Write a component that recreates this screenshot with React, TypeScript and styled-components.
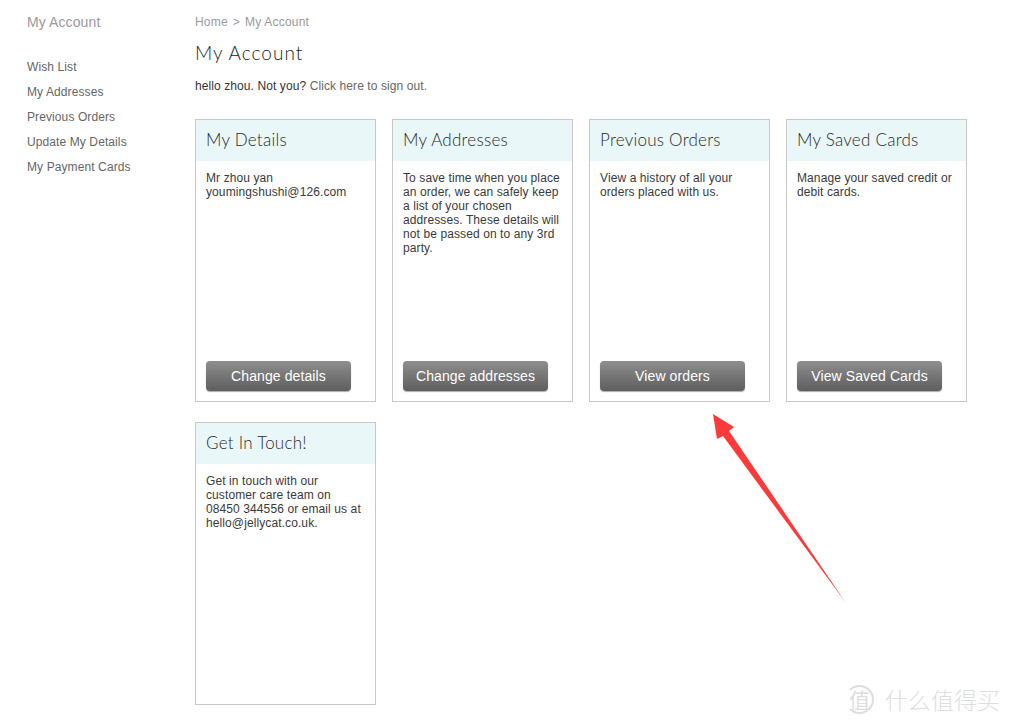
import styled, { createGlobalStyle } from 'styled-components';

const GlobalStyle = createGlobalStyle`
  html, body {
    margin: 0;
    padding: 0;
    background: #fff;
    font-family: "Liberation Sans", Arial, sans-serif;
    font-size: 12px;
    color: #333;
  }
`;

const Page = styled.div`
  position: relative;
  display: flex;
  width: 1011px;
  height: 724px;
  overflow: hidden;
  box-sizing: border-box;
`;

const Sidebar = styled.aside`
  width: 195px;
  padding: 14px 0 0 27px;
  box-sizing: border-box;
  flex: none;
`;

const SideTitle = styled.h3`
  margin: 0 0 24px;
  font-size: 14px;
  line-height: 17px;
  font-weight: 400;
  letter-spacing: 0.1px;
  color: #999;
`;

const SideLink = styled.a`
  display: block;
  height: 25px;
  line-height: 25px;
  letter-spacing: 0.1px;
  color: #666;
`;

const Main = styled.main`
  flex: 1;
  padding-top: 15px;
`;

const Crumbs = styled.div`
  display: flex;
  gap: 5px;
  line-height: 14px;
  letter-spacing: 0.2px;
  color: #999;
`;

const Heading = styled.h1`
  margin: 11px 0 0;
  font-family: "Lato", sans-serif;
  font-size: 19px;
  line-height: 26px;
  font-weight: 300;
  letter-spacing: 1px;
  color: #222;
`;

const Hello = styled.p`
  margin: 13px 0 26px;
  line-height: 14px;
  letter-spacing: 0.09px;
  color: #333;
  > a {
    color: #666;
  }
`;

const Cards = styled.div`
  display: grid;
  grid-template-columns: repeat(4, 181px);
  grid-auto-rows: 283px;
  column-gap: 16px;
  row-gap: 20px;
`;

const Card = styled.section`
  display: flex;
  flex-direction: column;
  border: 1px solid #c8c8c8;
  box-sizing: border-box;
`;

const CardHead = styled.h2`
  margin: 0;
  height: 41px;
  padding-left: 10px;
  background: #e9f7f8;
  font-family: "Lato", sans-serif;
  font-size: 17px;
  line-height: 39px;
  font-weight: 300;
  letter-spacing: 0.25px;
  color: #2a2a2a;
`;

const CardBody = styled.div`
  flex: 1;
  padding: 10px 10px 0;
  line-height: 14px;
  letter-spacing: 0.1px;
  color: #3a3a3a;
`;

const CardButton = styled.button`
  align-self: flex-start;
  width: 145px;
  height: 30px;
  margin: 0 0 10px 10px;
  padding: 0;
  border: 0;
  border-radius: 4px;
  background: linear-gradient(#8e8e8e, #5e5e5e);
  box-shadow: 0 1px 1px #aaa;
  font-family: "Liberation Sans", Arial, sans-serif;
  font-size: 14px;
  letter-spacing: 0.1px;
  color: #fff;
`;

const Arrow = styled.svg`
  position: absolute;
  left: 0;
  top: 0;
  pointer-events: none;
`;

const Watermark = styled.div`
  position: absolute;
  left: 845px;
  top: 684px;
  display: flex;
  align-items: center;
  gap: 11px;
  font-family: "Noto Sans CJK SC", sans-serif;
  color: #dedede;
`;

const WatermarkBadge = styled.span`
  width: 29px;
  height: 29px;
  border: 2px solid #dedede;
  border-left-color: transparent;
  border-radius: 50%;
  display: flex;
  align-items: center;
  justify-content: center;
  font-size: 21px;
  line-height: 1;
  box-sizing: border-box;
`;

const WatermarkText = styled.span`
  font-size: 23px;
  font-weight: 300;
  line-height: 30px;
`;

const sideLinks = ['Wish List', 'My Addresses', 'Previous Orders', 'Update My Details', 'My Payment Cards'];

const cards = [
  { title: 'My Details', body: <>Mr zhou yan<br />youmingshushi@126.com</>, action: 'Change details' },
  {
    title: 'My Addresses',
    body: 'To save time when you place an order, we can safely keep a list of your chosen addresses. These details will not be passed on to any 3rd party.',
    action: 'Change addresses',
  },
  { title: 'Previous Orders', body: 'View a history of all your orders placed with us.', action: 'View orders' },
  { title: 'My Saved Cards', body: 'Manage your saved credit or debit cards.', action: 'View Saved Cards' },
  {
    title: 'Get In Touch!',
    body: <>Get in touch with our<br />customer care team on<br />08450 344556 or email us at<br />hello@jellycat.co.uk.</>,
  },
];

function App() {
  return (
    <Page>
      <GlobalStyle />
      <Sidebar>
        <SideTitle>My Account</SideTitle>
        {sideLinks.map((l) => (
          <SideLink key={l}>{l}</SideLink>
        ))}
      </Sidebar>
      <Main>
        <Crumbs>
          <span>Home</span>
          <span>&gt;</span>
          <span>My Account</span>
        </Crumbs>
        <Heading>My Account</Heading>
        <Hello>
          hello zhou. Not you? <a>Click here to sign out.</a>
        </Hello>
        <Cards>
          {cards.map((c) => (
            <Card key={c.title}>
              <CardHead>{c.title}</CardHead>
              <CardBody>{c.body}</CardBody>
              {c.action && <CardButton>{c.action}</CardButton>}
            </Card>
          ))}
        </Cards>
      </Main>
      <Arrow width="1011" height="724" viewBox="0 0 1011 724">
        <path d="M713 414 L734 427 L729 431 L846 603 L723 436 L717 439 Z" fill="#fc3a3a" />
      </Arrow>
      <Watermark>
        <WatermarkBadge>值</WatermarkBadge>
        <WatermarkText>什么值得买</WatermarkText>
      </Watermark>
    </Page>
  );
}

export default App;
